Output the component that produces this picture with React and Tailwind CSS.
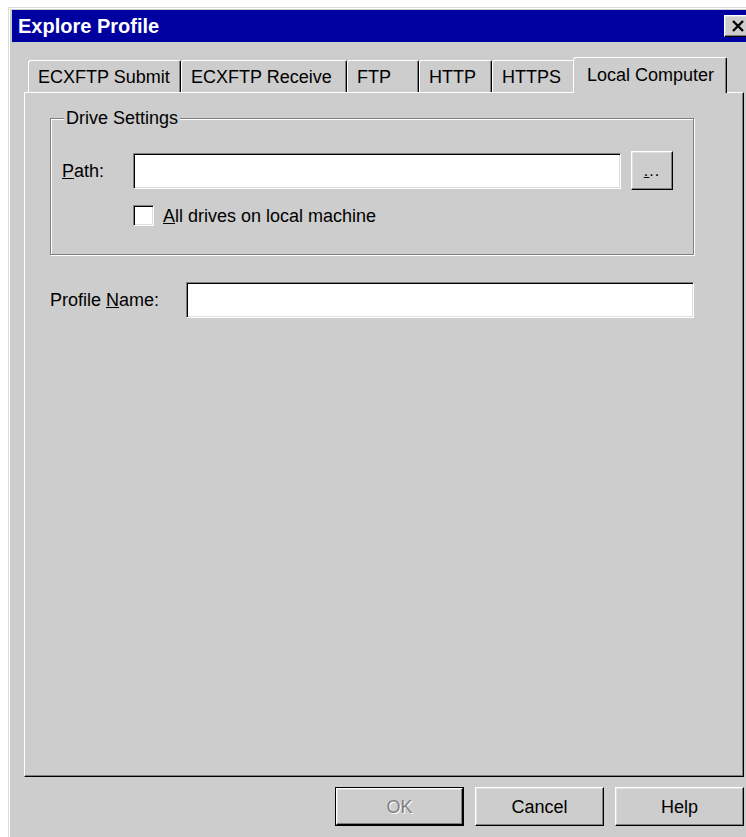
import { useState } from 'react';

const tabs = [
  { label: 'ECXFTP Submit', w: 'w-[153px]' },
  { label: 'ECXFTP Receive', w: 'w-[166px]' },
  { label: 'FTP', w: 'w-[72px]' },
  { label: 'HTTP', w: 'w-[73px]' },
  { label: 'HTTPS', w: 'w-[83px]' },
  { label: 'Local Computer', w: 'w-[154px]' },
];

const raised =
  'border border-t-white border-l-white border-b-black border-r-black shadow-[inset_-1px_-1px_0_#808080,inset_1px_1px_0_#dfdfdf]';
const sunken =
  'border border-t-[#808080] border-l-[#808080] border-b-white border-r-white shadow-[inset_1px_1px_0_#000,inset_-1px_-1px_0_#dfdfdf]';

function Tab({ label, w, active }) {
  if (active) {
    return (
      <div
        className={`${w} -ml-[2px] -mb-[1px] relative z-10 h-[36px] flex items-center pl-[13px] pb-[2px] bg-[#cdcdcd] border-l border-t border-white border-r border-r-black rounded-tl-[3px] rounded-tr-[2px] shadow-[inset_-1px_0_0_#808080]`}
      >
        {label}
      </div>
    );
  }
  return (
    <div
      className={`${w} h-[32px] flex items-center pl-[9px] border-l border-t border-white border-r border-r-black rounded-tl-[3px] rounded-tr-[2px] shadow-[inset_-1px_0_0_#808080]`}
    >
      {label}
    </div>
  );
}

function Button({ children, isDefault, disabled }) {
  const inner = (
    <div
      className={`h-full w-full flex items-center justify-center ${raised} ${
        disabled ? 'text-[#808080] [text-shadow:1px_1px_0_#fff]' : ''
      }`}
    >
      {children}
    </div>
  );
  if (isDefault) {
    return <div className="w-[129px] h-[39px] border border-black">{inner}</div>;
  }
  return <div className="w-[129px] h-[39px]">{inner}</div>;
}

export default function App() {
  const [active] = useState(5);

  return (
    <div className="w-[746px] h-[837px] overflow-hidden bg-white pl-[8px] pt-[7px] font-['Liberation_Sans',Arial,sans-serif] text-[18px] text-black leading-none">
      <div className="h-full border-l border-t border-[#dcdcdc]">
        <div className="h-full border-l border-t border-white bg-[#cdcdcd] pl-[2px] pt-[1px]">
          {/* caption */}
          <div className="h-[32px] bg-[#0000a0] flex items-center pl-[6px]">
            <span className="text-white font-bold text-[20px]">Explore Profile</span>
            <div className={`ml-auto -mr-[6px] w-[28px] h-[22px] bg-[#cdcdcd] flex items-center justify-center ${raised}`}>
              <svg width="14" height="12" viewBox="0 0 14 12">
                <path d="M2 1 L12 11 M12 1 L2 11" stroke="#000" strokeWidth="2.4" />
              </svg>
            </div>
          </div>

          <div className="pl-[12px] pr-[1px]">
            {/* tab strip */}
            <div className="mt-[15px] h-[35px] flex items-end pl-[4px]">
              {tabs.map((t, i) => (
                <Tab key={t.label} label={t.label} w={t.w} active={i === active} />
              ))}
            </div>

            {/* tab page */}
            <div className="w-[720px] h-[685px] border border-t-white border-l-white border-b-black border-r-black shadow-[inset_-1px_-1px_0_#808080] pl-[25px] pt-[25px]">
              <div className="relative w-[644px] h-[137px] border border-[#808080] shadow-[inset_1px_1px_0_#fff,1px_1px_0_#fff] pl-[11px] pt-[32px]">
                <span className="absolute -top-[10px] left-[13px] px-[2px] bg-[#cdcdcd]">Drive Settings</span>

                <div className="flex items-center">
                  <span className="w-[71px]">
                    <u>P</u>ath:
                  </span>
                  <div className={`w-[488px] h-[36px] bg-white ${sunken}`} />
                  <div className={`ml-[10px] w-[42px] h-[39px] flex items-end justify-center pb-[10px] ${raised}`}>
                    <span className="text-[16px] tracking-[1px]">
                      <u>.</u>..
                    </span>
                  </div>
                </div>

                <div className="flex items-center mt-[15px] ml-[71px]">
                  <div className={`w-[21px] h-[21px] bg-white ${sunken}`} />
                  <span className="ml-[9px]">
                    <u>A</u>ll drives on local machine
                  </span>
                </div>
              </div>

              <div className="flex items-center mt-[27px]">
                <span className="w-[136px]">
                  Profile <u>N</u>ame:
                </span>
                <div className={`w-[508px] h-[36px] bg-white ${sunken}`} />
              </div>
            </div>

            {/* dialog buttons */}
            <div className="flex justify-end gap-[11px] mt-[10px] pr-[1px]">
              <Button isDefault disabled>
                OK
              </Button>
              <Button>Cancel</Button>
              <Button>Help</Button>
            </div>
          </div>
        </div>
      </div>
    </div>
  );
}
